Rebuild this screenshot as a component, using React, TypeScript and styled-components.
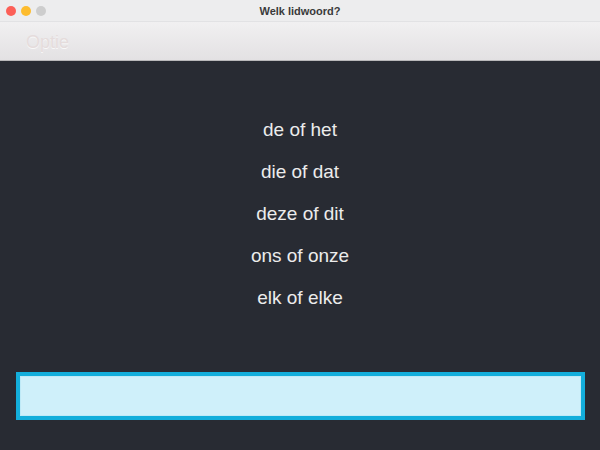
import React from 'react';
import styled, { createGlobalStyle } from 'styled-components';

const GlobalStyle = createGlobalStyle`
  html, body {
    margin: 0;
    padding: 0;
    background: #282b33;
  }
  body {
    font-family: "Liberation Sans", Arial, sans-serif;
  }
`;

const Window = styled.div`
  width: 600px;
  height: 450px;
  display: flex;
  flex-direction: column;
  background: #282b33;
  overflow: hidden;
`;

const TitleBar = styled.div`
  position: relative;
  height: 22px;
  flex: 0 0 22px;
  display: flex;
  align-items: center;
  justify-content: center;
  background: #ededee;
  border-bottom: 1px solid #e2e2e4;
  box-sizing: border-box;
`;

const Lights = styled.div`
  position: absolute;
  left: 6px;
  top: 6px;
  display: flex;
  gap: 5px;
`;

const Light = styled.span<{ $color: string }>`
  width: 10px;
  height: 10px;
  border-radius: 50%;
  background: ${p => p.$color};
`;

const Title = styled.div`
  font-size: 11px;
  font-weight: bold;
  color: #3a3a3a;
`;

const Toolbar = styled.div`
  height: 39px;
  flex: 0 0 39px;
  display: flex;
  align-items: center;
  padding: 3px 0 0 26px;
  box-sizing: border-box;
  background: linear-gradient(#f1f0f1, #e3e1e3);
  border-bottom: 1px solid #b9b8ba;
`;

const MenuItem = styled.span`
  font-family: "Liberation Sans", Arial, sans-serif;
  font-size: 18px;
  color: #e5dcdc;
  text-shadow: 0 1px 0 #f8f8f8;
`;

const Content = styled.div`
  flex: 1;
  display: flex;
  flex-direction: column;
  align-items: center;
  padding-top: 48px;
`;

const Option = styled.div`
  height: 42px;
  line-height: 42px;
  font-family: "Liberation Sans", Arial, sans-serif;
  font-size: 19px;
  color: #ececec;
`;

const InputWrap = styled.div`
  padding: 0 15px 30px 16px;
`;

const Input = styled.input`
  display: block;
  width: 100%;
  height: 48px;
  box-sizing: border-box;
  border: 4px solid #13aedb;
  box-shadow: inset 0 0 0 1px #bfeaf7;
  background: #cff0fa;
  outline: none;
  font-size: 18px;
  padding: 0 8px;
`;

const options = ['de of het', 'die of dat', 'deze of dit', 'ons of onze', 'elk of elke'];

export default function App() {
  return (
    <Window>
      <GlobalStyle />
      <TitleBar>
        <Lights>
          <Light $color="#fc5f57" />
          <Light $color="#fdbc2e" />
          <Light $color="#cdcdcd" />
        </Lights>
        <Title>Welk lidwoord?</Title>
      </TitleBar>
      <Toolbar>
        <MenuItem>Optie</MenuItem>
      </Toolbar>
      <Content>
        {options.map(o => (
          <Option key={o}>{o}</Option>
        ))}
      </Content>
      <InputWrap>
        <Input />
      </InputWrap>
    </Window>
  );
}
